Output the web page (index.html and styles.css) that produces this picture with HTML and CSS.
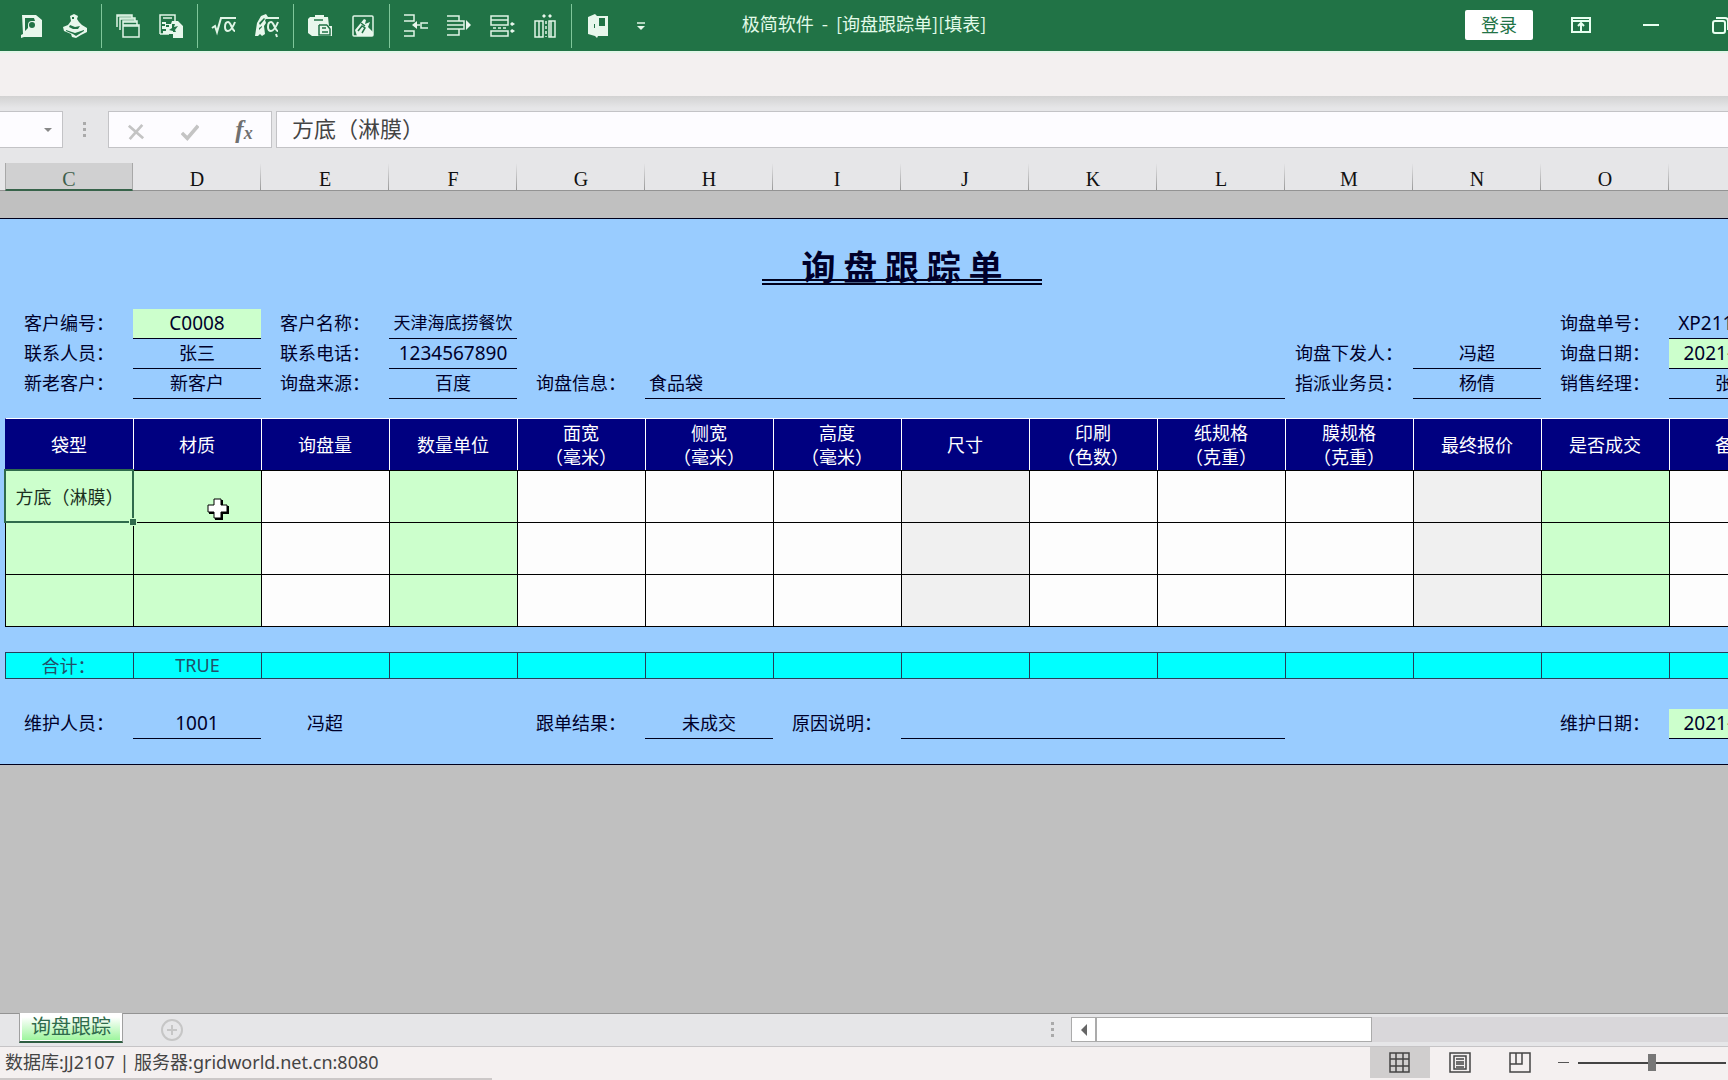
FILE: index.html
```html
<!DOCTYPE html>
<html lang="zh-CN">
<head>
<meta charset="utf-8">
<title>极简软件 - [询盘跟踪单][填表]</title>
<link rel="stylesheet" href="styles.css">
</head>
<body>
<div class="app">
  <header class="titlebar">
    <div class="tools">
      <button class="tool" aria-label="打印预览"><svg viewBox="0 0 24 24"><path class="f" d="M2 1h14l6 5v17H4l-3 1v-3l2-1z"/><path class="g" d="M5 4h9l1 3h-3a4 4 0 0 0-4 4v3l-3 3z"/><circle class="g" cx="12" cy="11" r="3"/></svg></button>
      <button class="tool" aria-label="打印"><svg viewBox="0 0 24 24"><path class="f" d="M7 2l4-2 4 2-1 3 2 3 3 3 5 3v4l-6 3-5 3-4-1-1-3-7-3-1-4 5-2 3-4z"/><path class="g" d="M7 11l5 2 5-1-2 3-5 0-4-2zM3 16l9 3 9-3v1l-8 5-3-2-7-3zM9 3h2v2H9z"/></svg></button>
      <span class="sep"></span>
      <button class="tool" aria-label="复制窗口"><svg viewBox="0 0 24 24"><path class="s" d="M1 13V1h15v3M4 16V4h15v3M7 19V7h14v4M7 11h16v12H7z"/><path class="s" d="M1 2h15M4 5h15M7 8h14M7 12h16"/></svg></button>
      <button class="tool" aria-label="导出"><svg viewBox="0 0 24 24"><path class="s" d="M1 20V1h15v6M4 4h9M1 20h9"/><path class="f" d="M13 7h6l5 5v12H14v-4H4v-3h3v-2H3v-3h3v-2H3V8h4v2h5z"/><path class="g" d="M13 10h3l-1 3 4-1-3 4 1 2h-3v-1l-4-1 3-2zM7 11h3v2H7z"/></svg></button>
      <span class="sep"></span>
      <button class="tool" aria-label="公式"><svg viewBox="0 0 24 24"><path class="s2" d="M0 14l3-2 2 6 4-14h15"/><path class="s2" d="M23 8c-2 5-4 9-7 9-2 0-3-2-3-4 0-3 1-5 3-5 3 0 4 9 7 9"/></svg></button>
      <button class="tool" aria-label="重算公式"><svg viewBox="0 0 24 24"><path class="f" d="M0 22L2 9l4-7 5-2 2 3-3 3 1 3-2 3 1 8-3 2-2-2-2 2z"/><path class="g" d="M4 9l5-5 1 1-5 6zM4 14l3-2v1l-3 3z"/><path class="s2" d="M10 4h14M23 8c-2 5-4 9-7 9-2 0-3-2-3-4 0-3 1-5 3-5 3 0 4 9 7 9M21 20l1 3"/></svg></button>
      <span class="sep"></span>
      <button class="tool" aria-label="粘贴"><svg viewBox="0 0 24 24"><path class="f" d="M2 3h5V1h9v2h4l1 9h3v10H4l-4-3V5z"/><path class="d" d="M6 6h9M11 11h8M11 11v10h11v-6l-3-4M14 14h4M14 18h6"/></svg></button>
      <button class="tool" aria-label="清除"><svg viewBox="0 0 24 24"><rect class="s" x="2" y="2" width="20" height="20" rx="1"/><path class="f" d="M4 16l9-11 2 1-1 4 5-2-2 5 5 5v4H6z"/><path class="d" d="M7 17l4-5 3 2-3 5M10 9l4 3"/></svg></button>
      <span class="sep"></span>
      <button class="tool" aria-label="插入行"><svg viewBox="0 0 24 24"><path class="s" d="M0 1h10v6H0M0 17h10v5H0M24 9h-7v5h7M16 11h-6"/><path class="f" d="M8 11l5-4v8z"/></svg></button>
      <button class="tool" aria-label="删除行"><svg viewBox="0 0 24 24"><path class="s" d="M0 2h12v5H0M0 7h17v8H0M0 11h17M12 15v6H0"/><path class="f" d="M19 6l5 5-5 5z"/></svg></button>
      <button class="tool" aria-label="行高"><svg viewBox="0 0 24 24"><path class="s" d="M1 2h17v9H1zM1 6h17M1 17h17v5H1z"/><path class="s" stroke-dasharray="3 2" d="M3 14h15"/><path class="f" d="M20 10l2-2 3 2-3 2zM20 17l2-2 3 2-3 2z"/></svg></button>
      <button class="tool" aria-label="列宽"><svg viewBox="0 0 24 24"><path class="s" d="M2 7h8v16H2zM6 7v16M16 7h6v16h-6zM18 7v16"/><path class="s" stroke-dasharray="3 2" d="M13 7v16"/><path class="f" d="M9 2l2-2 2 2-2 2zM15 2l2-2 2 2-2 2z"/></svg></button>
      <span class="sep"></span>
      <button class="tool" aria-label="退出"><svg viewBox="0 0 24 24"><path class="f" d="M2 3l7-3 2 2h11v20H12l-1 2-2-2-7-2z"/><path class="g" d="M13 4h6v8h-6zM8 10h1v4H8z"/></svg></button>
      <button class="tool" aria-label="更多"><svg viewBox="0 0 24 24"><path class="s" d="M8 9h8"/><path class="f" d="M8 12h8l-4 4z"/></svg></button>
    </div>
    <h1 class="title">极简软件&nbsp; -&nbsp; [询盘跟踪单][填表]</h1>
    <div class="winctl">
      <button class="login">登录</button>
      <button class="win" aria-label="功能区"><svg viewBox="0 0 24 24"><path class="w" d="M3 5h18v14H3zM3 8h18M12 18v-8M9 13l3-3 3 3"/></svg></button>
      <button class="win" aria-label="最小化"><svg viewBox="0 0 24 24"><path class="w" d="M4 12h16"/></svg></button>
      <button class="win" aria-label="还原"><svg viewBox="0 0 24 24"><rect class="w" x="4" y="8" width="12" height="12" rx="2"/><path class="w" d="M7 5h9q3 0 3 3v9"/></svg></button>
    </div>
  </header>
  <div class="ribbon"></div>

  <div class="formula">
    <button class="namebox" aria-label="名称框"><svg viewBox="0 0 8 4"><path d="M0 0h8L4 4z"/></svg></button>
    <span class="dots"></span>
    <div class="fbtns">
      <button aria-label="取消"><svg viewBox="0 0 20 20"><path d="M2 3l16 14M17 2L3 18"/></svg></button>
      <button aria-label="输入"><svg viewBox="0 0 20 20"><path class="tick" d="M1 11l6 6L19 3"/></svg></button>
      <button class="fx" aria-label="插入函数">f<small>x</small></button>
    </div>
    <input class="finput" aria-label="编辑栏" value="方底（淋膜）">
  </div>

  <div class="colheads">
    <span class="on">C</span><span>D</span><span>E</span><span>F</span><span>G</span><span>H</span><span>I</span><span>J</span><span>K</span><span>L</span><span>M</span><span>N</span><span>O</span><span></span>
  </div>

  <main class="workspace">
    <section class="sheet">
      <div class="banner"><h2>询 盘 跟 踪 单</h2></div>
      <div class="meta">
        <label for="cno">客户编号：</label><input id="cno" class="num pick" value="C0008">
        <label for="cname">客户名称：</label><input id="cname" class="fit" value="天津海底捞餐饮">
        <label class="c13" for="xno">询盘单号：</label><input id="xno" class="num" value="XP21110001">
        <label for="man">联系人员：</label><input id="man" value="张三">
        <label for="tel">联系电话：</label><input id="tel" class="num" value="1234567890">
        <label class="c11" for="from">询盘下发人：</label><input id="from" value="冯超">
        <label for="xdate">询盘日期：</label><input id="xdate" class="num pick" value="2021-11-10">
        <label for="kind">新老客户：</label><input id="kind" value="新客户">
        <label for="src">询盘来源：</label><input id="src" value="百度">
        <label for="info">询盘信息：</label><input id="info" class="span5" value="食品袋">
        <label for="to">指派业务员：</label><input id="to" value="杨倩">
        <label for="mgr">销售经理：</label><input id="mgr" value="张三">
      </div>

      <table class="items">
        <thead><tr><th>袋型</th><th>材质</th><th>询盘量</th><th>数量单位</th><th>面宽<br>（毫米）</th><th>侧宽<br>（毫米）</th><th>高度<br>（毫米）</th><th>尺寸</th><th>印刷<br>（色数）</th><th>纸规格<br>（克重）</th><th>膜规格<br>（克重）</th><th>最终报价</th><th>是否成交</th><th>备注</th></tr></thead>
        <tbody>
          <tr><td class="pick sel">方底（淋膜）<i class="handle"></i></td><td class="pick cur"><svg class="pointer" viewBox="0 0 22 22"><path class="shadow" d="M8 2h8v6h6v8h-6v6H8v-6H2V8h6z"/><path class="plus" d="M7 1h7v6h6v7h-6v6H7v-6H1V7h6z"/></svg></td><td></td><td class="pick"></td><td></td><td></td><td></td><td class="calc"></td><td></td><td></td><td></td><td class="calc"></td><td class="pick"></td><td></td></tr>
          <tr><td class="pick"></td><td class="pick"></td><td></td><td class="pick"></td><td></td><td></td><td></td><td class="calc"></td><td></td><td></td><td></td><td class="calc"></td><td class="pick"></td><td></td></tr>
          <tr><td class="pick"></td><td class="pick"></td><td></td><td class="pick"></td><td></td><td></td><td></td><td class="calc"></td><td></td><td></td><td></td><td class="calc"></td><td class="pick"></td><td></td></tr>
        </tbody>
      </table>

      <table class="total">
        <tbody><tr><th scope="row">合计：</th><td>TRUE</td><td></td><td></td><td></td><td></td><td></td><td></td><td></td><td></td><td></td><td></td><td></td><td></td></tr></tbody>
      </table>

      <div class="meta">
        <label for="keeper">维护人员：</label><input id="keeper" class="num" value="1001"><span>冯超</span>
        <label class="c5" for="result">跟单结果：</label><input id="result" value="未成交">
        <label for="why">原因说明：</label><input id="why" class="span3">
        <label class="c13" for="kdate">维护日期：</label><input id="kdate" class="num pick" value="2021-11-10">
      </div>
    </section>
  </main>

  <nav class="tabs">
    <a class="tab" href="#sheet">询盘跟踪</a>
    <button class="add" aria-label="新建工作表"><svg viewBox="0 0 24 24"><circle cx="12" cy="12" r="10"/><path class="cross" d="M12 7v10M7 12h10"/></svg></button>
    <span class="dots"></span>
    <div class="scroll"><button class="arrow" aria-label="向左"><svg viewBox="0 0 6 12"><path d="M6 0v12L0 6z"/></svg></button><span class="thumb"></span></div>
  </nav>

  <footer class="status">
    <p class="info">数据库:JJ2107 | 服务器:gridworld.net.cn:8080</p>
    <button class="view on" aria-label="普通"><svg viewBox="0 0 24 24"><path d="M2 2h19v19H2zM2 8h19M2 15h19M8 2v19M15 2v19"/></svg></button>
    <button class="view" aria-label="页面布局"><svg viewBox="0 0 24 24"><path d="M2 2h20v19H2zM6 5h12v13H6zM8 8h8M8 11h8M8 13h8M8 16h8"/></svg></button>
    <button class="view" aria-label="分页预览"><svg viewBox="0 0 24 24"><path d="M2 2h20v19H2zM2 13h12V2M8 2v11"/></svg></button>
    <button class="less" aria-label="缩小"></button>
    <input class="zoom" type="range" aria-label="缩放" min="0" max="100" value="50">
  </footer>
</div>
</body>
</html>
```
FILE: styles.css
```css
* { box-sizing: border-box; }

body {
  margin: 0;
  font: 18px/26px "Noto Sans CJK SC", sans-serif;
  color: #00002a;
}

button {
  display: flex;
  align-items: center;
  justify-content: center;
  padding: 0;
  border: 0;
  background: none;
  font: inherit;
}

input { font: inherit; color: inherit; min-width: 0; }

.app {
  display: flex;
  flex-direction: column;
  min-height: 100vh;
  overflow: hidden;
}

/* Title bar */
.titlebar {
  display: grid;
  grid-template-columns: minmax(0, 1fr) auto minmax(0, 1fr);
  height: 53px;
  background: #217346;
  border-bottom: 2px solid #e2f6e8;
  overflow: hidden;
}
.tools { display: flex; padding: 4px 0 0 10px; height: 48px; }
.tool { width: 43px; flex: none; }
.tool svg { width: 24px; height: 24px; overflow: visible; }
.sep { flex: none; width: 10px; background: linear-gradient(#7fc79a, #7fc79a) 5px 0 / 1px 100% no-repeat; }
.f { fill: #e8f7ec; }
.g { fill: #217346; }
.s, .s2, .d, .w { fill: none; stroke: #e0f5e6; stroke-width: 1.5; }
.s2 { stroke-width: 2; }
.d { stroke: #217346; }
.w { stroke: #e8fff0; stroke-width: 2; }
.title { margin: 0; padding-top: 10px; font-size: 18px; font-weight: 400; color: #e2fbe9; white-space: nowrap; }
.winctl { display: flex; align-items: flex-start; justify-content: flex-end; margin-right: -28px; }
.login { width: 68px; height: 30px; margin: 10px 13px 0 0; padding-bottom: 2px; border-radius: 2px; background: #fff; color: #217346; }
.win { width: 70px; height: 49px; }
.win svg { width: 24px; height: 24px; }

.ribbon { height: 43px; background: #f3f0f0; }

/* Formula bar */
.formula {
  display: flex;
  height: 67px;
  padding: 15px 0;
  background: linear-gradient(#d2d2d2, #e6e6e8 12px);
}
.namebox { width: 63px; justify-content: flex-end; padding-right: 10px; background: #fdfcff; border: 1px solid #c3c3c6; border-left: 0; }
.namebox svg { width: 8px; height: 4px; fill: #888; }
.dots {
  width: 3px;
  height: 15px;
  background: repeating-linear-gradient(#aaa 0 3px, transparent 3px 6px);
}
.formula .dots { align-self: center; margin: 0 22px 0 20px; }
.fbtns { display: grid; grid-template-columns: repeat(3, 54px); width: 164px; background: #fdfcff; border: 1px solid #c3c3c6; }
.fbtns svg { width: 18px; height: 18px; fill: none; stroke: #c4c4c4; stroke-width: 3; }
.fbtns .tick { stroke-width: 4; }
.fx { padding-bottom: 3px; font: italic 700 25px/30px "Liberation Serif", serif; color: #707070; }
.fx small { font-size: 18px; padding-top: 6px; }
.finput { flex: 1; margin-left: 4px; padding: 0 15px 5px; border: 1px solid #c3c3c6; border-right: 0; background: #fdfcff; color: #444; font-size: 22px; }

/* Column headings */
.colheads {
  display: flex;
  height: 28px;
  padding-left: 5px;
  background: #e6e6e8;
  border-bottom: 1px solid #939393;
}
.colheads span {
  flex: none;
  width: 128px;
  padding-top: 3px;
  text-align: center;
  font-family: "Liberation Serif", serif;
  font-size: 20px;
  line-height: 26px;
  color: #111;
  background: linear-gradient(transparent, #999) right / 1px 100% no-repeat;
}
.colheads .on { margin: 0 0 -1px; color: #3e5f4c; background: #d0d0d1; border: 1px solid #a8a8a8; border-width: 0 1px 2px; border-bottom-color: #37634a; }

/* Sheet */
.workspace { flex: 1; padding-top: 27px; background: #c0c0c0; }
.sheet { padding: 0 0 25px 5px; background: #99ccff; border: 1px solid #00001c; border-width: 1px 0; overflow: hidden; }
.banner { display: flex; justify-content: center; align-items: flex-start; width: 1794px; height: 90px; padding-top: 28px; }
.banner h2 {
  width: 280px;
  height: 38px;
  margin: 0;
  border-bottom: 6px double #00001c;
  font-size: 34px;
  line-height: 38px;
  text-align: center;
  white-space: nowrap;
}
.meta { display: grid; grid-template-columns: repeat(14, 128px); grid-auto-rows: 30px; }
.meta label, .meta span { text-align: center; line-height: 26px; white-space: nowrap; }
.meta input { width: 100%; padding: 0 0 3px; border: 0; border-bottom: 1px solid #00001c; background: none; text-align: center; border-radius: 0; }
.meta .num { padding-bottom: 2px; font-family: "Noto Sans", sans-serif; font-size: 19px; }
.meta .fit { font-size: 17px; }
.meta .pick { background: #ccffcc; }
.meta .c5 { grid-column: 5; }
.meta .c11 { grid-column: 11; }
.meta .c13 { grid-column: 13; }
.meta .span5 { grid-column: span 5; text-align: left; padding-left: 4px; }
.meta .span3 { grid-column: span 3; }

table { table-layout: fixed; width: 1792px; border-collapse: separate; border-spacing: 0; }
th, td { padding: 0 0 2px; border: 0 solid #000; border-width: 1px 0 0 1px; text-align: center; white-space: nowrap; font-weight: 400; }
.items { margin-top: 19px; }
.items th { height: 52px; padding: 0 1px 2px 0; border-color: #fff; background: #000080; color: #fff; line-height: 24px; }
.items th:first-child { border-left-color: #000080; }
.items td { height: 52px; background: #fdfdfd; }
.items tr:last-child td { height: 53px; border-bottom-width: 1px; }
.items thead tr:last-child th { height: 52px; border-bottom-width: 0; }
.items .pick { background: #ccffcc; }
.items .calc { background: #f0f0f0; }
.items .sel { position: relative; color: #1b301f; outline: 2px solid #2f6b4c; outline-offset: -1px; z-index: 1; }
.items .cur { position: relative; }
.handle { position: absolute; right: -3px; bottom: -3px; width: 6px; height: 6px; background: #2f6b4c; outline: 1px solid #ccffcc; }
.pointer { position: absolute; left: 73px; top: 27px; width: 22px; height: 22px; }
.plus { fill: #fff; stroke: #000; stroke-width: 1; }
.shadow { fill: #000; }

.total { margin: 25px 0 30px; }
.total th, .total td { height: 27px; border-color: #24405a; border-bottom-width: 1px; background: #00ffff; color: #22506a; line-height: 22px; }
.total th { padding-right: 2px; }
.total td { font-family: "Noto Sans", sans-serif; }

/* Sheet tabs */
.tabs { display: flex; align-items: flex-start; height: 33px; background: #e6e6e8; border-top: 1px solid #939393; }
.tab {
  width: 104px;
  height: 30px;
  margin: -1px 0 0 19px;
  border: 1px solid #a0a0a0;
  border-width: 0 1px 2px;
  border-bottom-color: #2f5e42;
  background: linear-gradient(#fff, #fff 4px, #99f599);
  box-shadow: inset 2px -1px #fff, inset -2px 0 #fff;
  color: #2f6b4c;
  font-size: 20px;
  line-height: 26px;
  text-align: center;
  text-decoration: none;
}
.add { margin: 4px auto 0 37px; }
.add svg { width: 24px; height: 24px; fill: none; stroke: #c6c6c6; stroke-width: 2; }
.tabs .dots { margin: 8px 17px 0 0; }
.scroll { display: flex; width: 657px; height: 25px; margin-top: 3px; background: #d9d7da; }
.arrow { width: 25px; background: #fff; border: 1px solid #ababab; }
.arrow svg { width: 6px; height: 12px; fill: #666; }
.thumb { width: 276px; background: #fff; border: 1px solid #ababab; }

/* Status bar */
.status {
  display: flex;
  height: 34px;
  border-top: 1px solid #c6c4c6;
  background: linear-gradient(#ccc8c8, #ccc8c8) 0 100% / 492px 2px no-repeat, #f4f0f0;
  color: #444;
}
.info { margin: 0 auto 0 5px; padding-top: 2px; font-family: "Noto Sans", "Noto Sans CJK SC", sans-serif; }
.view { width: 60px; height: 31px; }
.view.on { background: #d0cece; }
.view svg { width: 24px; height: 24px; fill: none; stroke: #444; stroke-width: 1.5; }
.less { width: 11px; height: 31px; margin: 0 9px 0 8px; background: linear-gradient(#555, #555) 0 15px / 11px 1px no-repeat; }
.zoom { appearance: none; width: 148px; height: 31px; margin: 0 2px 0 0; background: linear-gradient(#444, #444) 0 15px / 100% 2px no-repeat; }
.zoom::-webkit-slider-thumb { appearance: none; width: 8px; height: 17px; background: #777; }
```
